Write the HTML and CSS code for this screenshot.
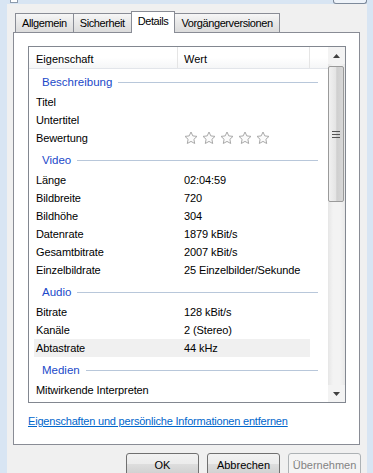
FILE: index.html
```html
<!DOCTYPE html>
<html lang="de">
<head>
    <meta charset="UTF-8">
    <title>Eigenschaften</title>
    <link rel="stylesheet" href="styles.css">
</head>
<body>
    <div class="frame">
        <div class="edge"></div>
        <div class="window">
            <div class="titlebar">
                <div class="title-icon"></div>
                <div class="title-close"></div>
            </div>
            <div class="client">
                <div class="tabs">
                    <div class="tab">Allgemein</div>
                    <div class="tab">Sicherheit</div>
                    <div class="tab active">Details</div>
                    <div class="tab">Vorgängerversionen</div>
                </div>

                <div class="panel">
                    <div class="list">
                        <div class="list-body">
                            <div class="list-head">
                                <div class="col col-name">Eigenschaft</div>
                                <div class="col col-value">Wert</div>
                                <div class="col col-rest"></div>
                            </div>

                            <div class="group"><span>Beschreibung</span><i></i></div>
                            <div class="row"><span>Titel</span><span></span></div>
                            <div class="row"><span>Untertitel</span><span></span></div>
                            <div class="row"><span>Bewertung</span>
                                <span class="stars">
                                    <svg viewBox="0 0 14 14"><path d="M7 1l1.8 3.9 4.2.5-3.1 2.9.8 4.2L7 10.4 3.3 12.5l.8-4.2L1 5.4l4.2-.5z"/></svg>
                                    <svg viewBox="0 0 14 14"><path d="M7 1l1.8 3.9 4.2.5-3.1 2.9.8 4.2L7 10.4 3.3 12.5l.8-4.2L1 5.4l4.2-.5z"/></svg>
                                    <svg viewBox="0 0 14 14"><path d="M7 1l1.8 3.9 4.2.5-3.1 2.9.8 4.2L7 10.4 3.3 12.5l.8-4.2L1 5.4l4.2-.5z"/></svg>
                                    <svg viewBox="0 0 14 14"><path d="M7 1l1.8 3.9 4.2.5-3.1 2.9.8 4.2L7 10.4 3.3 12.5l.8-4.2L1 5.4l4.2-.5z"/></svg>
                                    <svg viewBox="0 0 14 14"><path d="M7 1l1.8 3.9 4.2.5-3.1 2.9.8 4.2L7 10.4 3.3 12.5l.8-4.2L1 5.4l4.2-.5z"/></svg>
                                </span>
                            </div>

                            <div class="group"><span>Video</span><i></i></div>
                            <div class="row"><span>Länge</span><span>02:04:59</span></div>
                            <div class="row"><span>Bildbreite</span><span>720</span></div>
                            <div class="row"><span>Bildhöhe</span><span>304</span></div>
                            <div class="row"><span>Datenrate</span><span>1879 kBit/s</span></div>
                            <div class="row"><span>Gesamtbitrate</span><span>2007 kBit/s</span></div>
                            <div class="row"><span>Einzelbildrate</span><span>25 Einzelbilder/Sekunde</span></div>

                            <div class="group"><span>Audio</span><i></i></div>
                            <div class="row"><span>Bitrate</span><span>128 kBit/s</span></div>
                            <div class="row"><span>Kanäle</span><span>2 (Stereo)</span></div>
                            <div class="row hover"><span>Abtastrate</span><span>44 kHz</span></div>

                            <div class="group"><span>Medien</span><i></i></div>
                            <div class="row"><span>Mitwirkende Interpreten</span><span></span></div>
                        </div>

                        <div class="scrollbar">
                            <div class="sb-btn"><svg viewBox="0 0 7 4"><path d="M0 4L3.5 0 7 4z"/></svg></div>
                            <div class="sb-track">
                                <div class="sb-thumb">
                                    <svg viewBox="0 0 8 7"><path d="M0 .5h8M0 3.5h8M0 6.5h8"/></svg>
                                </div>
                            </div>
                            <div class="sb-btn"><svg viewBox="0 0 7 4"><path d="M0 0L3.5 4 7 0z"/></svg></div>
                        </div>
                    </div>

                    <a class="link" href="#">Eigenschaften und persönliche Informationen entfernen</a>
                </div>

                <div class="buttons">
                    <button>OK</button>
                    <button>Abbrechen</button>
                    <button disabled>Übernehmen</button>
                </div>
            </div>
        </div>
        <div class="edge"></div>
    </div>
</body>
</html>
```

FILE: styles.css
```css
body {
    margin: 0;
    width: 373px;
    height: 473px;
    overflow: hidden;
    background-color: #d8e5f3;
    font-family: "Liberation Sans", Arial, sans-serif;
    font-size: 11px;
    color: #000;
}

.frame {
    display: flex;
    height: 473px;
}

.edge {
    width: 7px;
    background-color: #d8e5f3;
}

.edge:last-child {
    width: 6px;
}

.window {
    flex: 1;
    display: flex;
    flex-direction: column;
}

/* bottom sliver of the title bar */

.titlebar {
    height: 5px;
    display: flex;
    justify-content: space-between;
    align-items: flex-start;
    background-color: #d8e5f3;
    padding: 0 0 0 3px;
}

.title-icon {
    width: 6px;
    height: 2px;
    border: 1px solid #8d9aab;
    border-top: none;
    background-color: #fff;
}

.title-close {
    width: 32px;
    height: 3px;
    border: 1px solid #7d8a9b;
    border-top: none;
    border-radius: 0 0 3px 3px;
    background-color: #eef3f9;
}

.client {
    flex: 1;
    background-color: #f0f0f0;
    padding-top: 9px;
}

/* tabs */

.tabs {
    display: flex;
    height: 19px;
    margin-left: 8px;
    align-items: flex-end;
}

.tab {
    height: 18px;
    line-height: 19px;
    padding: 0 6px;
    letter-spacing: -0.4px;
    border: 1px solid #898c95;
    border-bottom: none;
    border-right: none;
    background: linear-gradient(#f6f6f6, #e8e8e8 50%, #dcdcdc);
}

.tab:nth-child(4) {
    border-right: 1px solid #898c95;
}

.tab.active {
    position: relative;
    height: 21px;
    line-height: 18px;
    margin-bottom: -1px;
    background: #fff;
    border-right: 1px solid #898c95;
    z-index: 1;
}

.tab.active + .tab {
    border-left: none;
}

.panel {
    margin-left: 6px;
    width: 347px;
    height: 413px;
    box-sizing: border-box;
    border: 1px solid #898c95;
    background-color: #fff;
    padding: 13px 0 0 14px;
}

/* list view */

.list {
    display: flex;
    width: 318px;
    height: 357px;
    box-sizing: border-box;
    border: 1px solid #828790;
    overflow: hidden;
}

.list-body {
    flex: 1;
    overflow: hidden;
}

.list-head {
    display: flex;
    height: 21px;
    border-bottom: 1px solid #e2e5ea;
    background: linear-gradient(#fff 50%, #f5f6f7);
}

.col {
    line-height: 21px;
    padding-top: 2px;
    box-sizing: border-box;
}

.col-name {
    width: 149px;
    padding-left: 7px;
    border-right: 1px solid #e5e5e5;
}

.col-value {
    width: 132px;
    padding-left: 6px;
    border-right: 1px solid #e5e5e5;
}

.col-rest {
    flex: 1;
}

.group {
    display: flex;
    align-items: center;
    height: 24px;
    padding-top: 2px;
    box-sizing: border-box;
    margin: 0 10px 0 13px;
    color: #2149c9;
    font-size: 11.5px;
}

.group i {
    flex: 1;
    height: 1px;
    margin-left: 6px;
    background-color: #b8c7da;
}

.row {
    display: grid;
    grid-template-columns: 148px 1fr;
    height: 18px;
    line-height: 18px;
    margin: 0 18px 0 5px;
    padding-left: 2px;
    letter-spacing: -0.1px;
    white-space: nowrap;
}

.row.hover {
    background-color: #f0f0f0;
}

.stars {
    display: flex;
    gap: 4px;
    align-items: center;
}

.stars svg {
    width: 14px;
    height: 14px;
    fill: #fbfbfb;
    stroke: #a9a9a9;
    stroke-width: 1;
}

/* scrollbar */

.scrollbar {
    width: 17px;
    display: flex;
    flex-direction: column;
    background: linear-gradient(to right, #e6e6e6, #f3f3f3 30%, #f3f3f3 70%, #e9e9e9);
}

.sb-btn {
    height: 17px;
    display: flex;
    align-items: center;
    justify-content: center;
    background-color: #f3f3f3;
}

.sb-btn svg {
    width: 7px;
    height: 4px;
    fill: #404040;
}

.sb-track {
    flex: 1;
    padding-top: 2px;
}

.sb-thumb {
    height: 136px;
    margin-right: 1px;
    border: 1px solid #9a9a9a;
    border-radius: 2px;
    box-sizing: border-box;
    background: linear-gradient(to right, #f1f1f1, #e4e4e4 50%, #cfcfcf 55%, #d8d8d8);
    display: flex;
    align-items: center;
    justify-content: center;
}

.sb-thumb svg {
    width: 8px;
    height: 7px;
    stroke: #555;
    stroke-width: 1;
}

.link {
    display: block;
    margin-top: 11px;
    line-height: 15px;
    color: #0066cc;
    text-decoration: underline;
    letter-spacing: -0.2px;
}

/* buttons */

.buttons {
    display: flex;
    justify-content: flex-end;
    gap: 8px;
    padding: 8px 6px 0 0;
}

button {
    width: 73px;
    height: 23px;
    font-family: "Liberation Sans", Arial, sans-serif;
    font-size: 11px;
    color: #000;
    border: 1px solid #707070;
    border-radius: 3px;
    background: linear-gradient(#f2f2f2, #ebebeb 50%, #dddddd 50%, #cfcfcf);
    padding: 0;
}

button:disabled {
    color: #838383;
    border-color: #adb2b5;
    background: #f4f4f4;
}
```
